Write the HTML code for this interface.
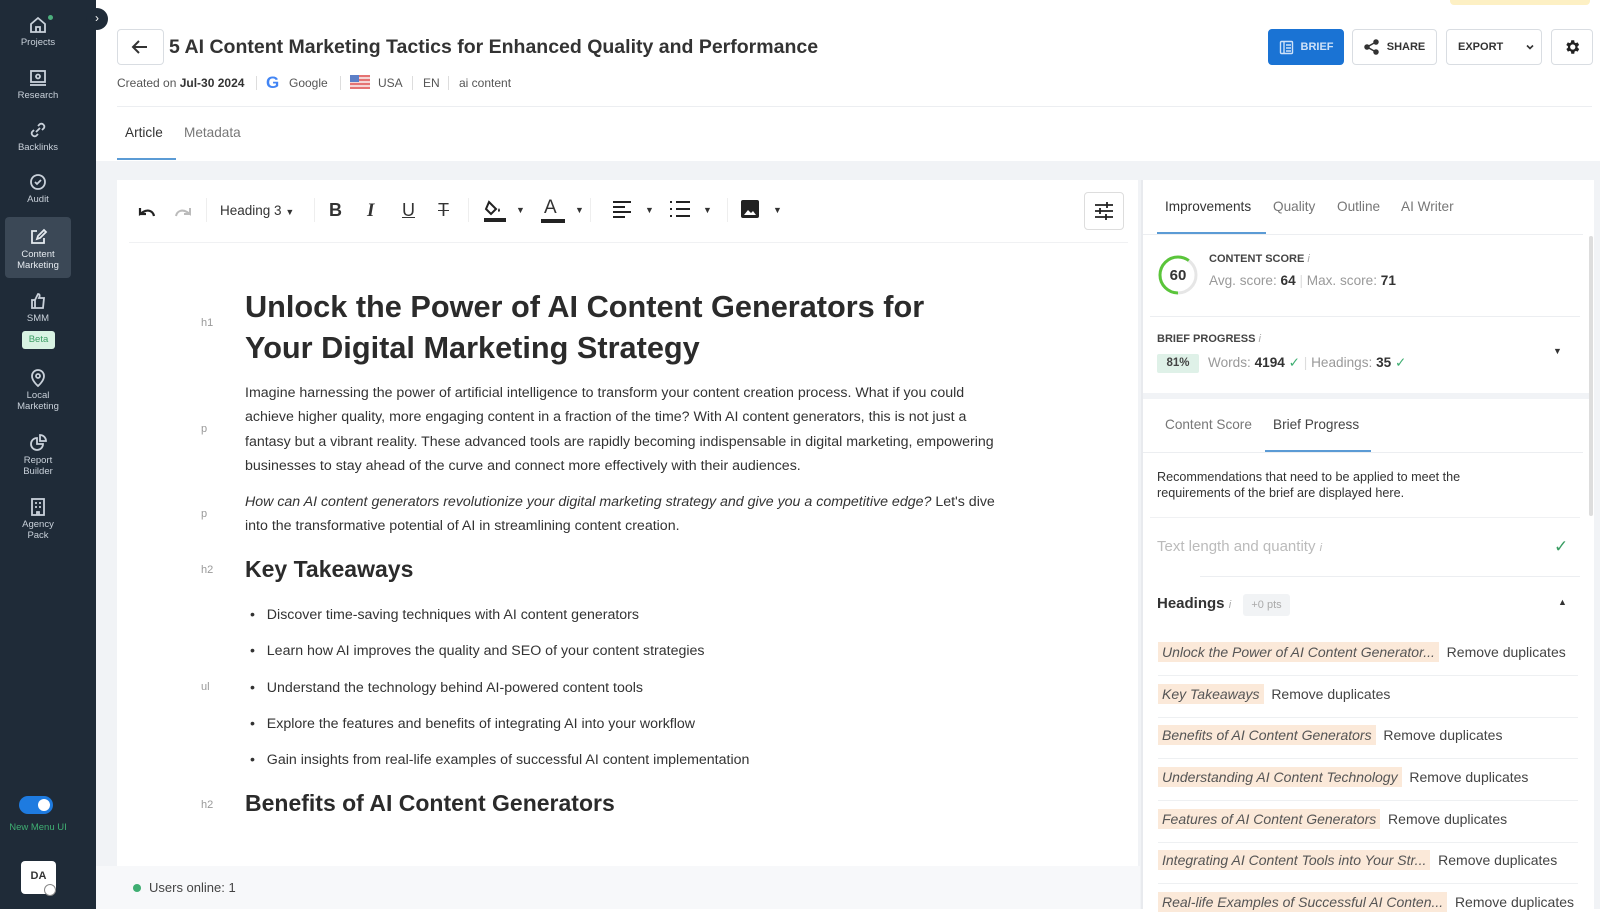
<!DOCTYPE html>
<html><head><meta charset="utf-8"><style>
*{box-sizing:border-box;margin:0;padding:0}
body{width:1600px;height:909px;overflow:hidden;background:#fff;font-family:"Liberation Sans",sans-serif;color:#333;position:relative}
.a{position:absolute;white-space:nowrap}
.sb{position:absolute;left:0;top:0;width:96px;height:909px;background:#1f2b38}
.ni{position:absolute;left:0;width:76px;text-align:center;color:#c9d1da;font-size:9.5px;line-height:11px}
.ni svg{display:block;margin:0 auto 2px}
.btn{position:absolute;top:29px;height:36px;border:1px solid #d9dde2;border-radius:4px;background:#fff;font-size:11px;font-weight:bold;color:#333;display:flex;align-items:center;justify-content:center;gap:7px}
.tb{position:absolute;top:200px;color:#333;font-size:17px}
.lbl{position:absolute;left:201px;color:#999;font-size:11px}
.p{position:absolute;left:245px;font-size:14.2px;color:#333;white-space:nowrap;line-height:24.4px}
.hl{background:#fbe9d9;color:#555;font-style:italic;padding:2px 4px}
.row{position:absolute;left:1158px;font-size:14px;color:#444;white-space:nowrap}
.sep{position:absolute;left:1158px;width:420px;height:1px;background:#eef0f2}
</style></head><body>
<div class="sb">
 <div class="ni" style="top:15px;left:0;width:76px"><svg width="20" height="20" viewBox="0 0 20 20" fill="none" stroke="#c9d1da" stroke-width="1.8"><path d="M3 9l7-6 7 6v8H3z"/><path d="M8 17v-5h4v5"/></svg>Projects</div>
 <div style="position:absolute;left:48px;top:15px;width:5px;height:5px;border-radius:50%;background:#4caf7d"></div>
 <div class="ni" style="top:68px"><svg width="20" height="20" viewBox="0 0 20 20" fill="none" stroke="#c9d1da" stroke-width="1.8"><rect x="3" y="3" width="14" height="11"/><path d="M2 17h16"/><circle cx="10" cy="8.5" r="2"/></svg>Research</div>
 <div class="ni" style="top:120px"><svg width="20" height="20" viewBox="0 0 20 20" fill="none" stroke="#c9d1da" stroke-width="1.8"><path d="M8 12l4-4M6 10l-2 2a3 3 0 004 4l2-2M14 10l2-2a3 3 0 00-4-4l-2 2"/></svg>Backlinks</div>
 <div class="ni" style="top:172px"><svg width="20" height="20" viewBox="0 0 20 20" fill="none" stroke="#c9d1da" stroke-width="1.8"><circle cx="10" cy="10" r="7"/><path d="M7 10l2 2 4-4"/></svg>Audit</div>
 <div style="position:absolute;left:5px;top:217px;width:66px;height:61px;background:#3b4856;border-radius:4px"></div>
 <div class="ni" style="top:227px;color:#e6ebf0"><svg width="20" height="20" viewBox="0 0 20 20" fill="none" stroke="#e6ebf0" stroke-width="1.8"><path d="M16 11v5H4V4h5"/><path d="M9 12l1-3 6-6 2 2-6 6z"/></svg>Content<br>Marketing</div>
 <div class="ni" style="top:291px"><svg width="20" height="20" viewBox="0 0 20 20" fill="none" stroke="#c9d1da" stroke-width="1.8"><path d="M4 9h3v8H4zM7 9l3-6c2 0 2 2 1 4h5l-1 10H7"/></svg>SMM</div>
 <div style="position:absolute;left:22px;top:331px;width:33px;height:18px;background:#d8f3e3;border-radius:3px;color:#3a9d63;font-size:9.5px;text-align:center;line-height:18px">Beta</div>
 <div class="ni" style="top:368px"><svg width="20" height="20" viewBox="0 0 20 20" fill="none" stroke="#c9d1da" stroke-width="1.8"><path d="M10 18s6-5 6-10a6 6 0 00-12 0c0 5 6 10 6 10z"/><circle cx="10" cy="8" r="2"/></svg>Local<br>Marketing</div>
 <div class="ni" style="top:433px"><svg width="20" height="20" viewBox="0 0 20 20" fill="none" stroke="#c9d1da" stroke-width="1.8"><path d="M9 5a6 6 0 106 6H9z"/><path d="M12 2v6h6a6 6 0 00-6-6z"/></svg>Report<br>Builder</div>
 <div class="ni" style="top:497px"><svg width="20" height="20" viewBox="0 0 20 20" fill="none" stroke="#c9d1da" stroke-width="1.8"><rect x="4" y="2" width="12" height="16"/><path d="M7 6h2M11 6h2M7 10h2M11 10h2M9 18v-3h2v3"/></svg>Agency<br>Pack</div>
 <div style="position:absolute;left:19px;top:796px;width:34px;height:18px;border-radius:9px;background:#1e7be0"></div>
 <div style="position:absolute;left:38px;top:799px;width:12px;height:12px;border-radius:50%;background:#fff"></div>
 <div class="a" style="left:0;width:76px;text-align:center;top:822px;font-size:9.5px;color:#3fae72">New Menu UI</div>
 <div style="position:absolute;left:21px;top:861px;width:35px;height:33px;border-radius:4px;background:#fff;color:#333;font-size:11px;font-weight:bold;text-align:center;line-height:30px">DA</div>
 <div style="position:absolute;left:44px;top:884px;width:12px;height:12px;border-radius:50%;background:#fff;border:1.5px solid #888"></div>
</div>
<div style="position:absolute;left:86px;top:8px;width:22px;height:22px;border-radius:50%;background:#1f2b38;color:#fff;font-size:12px;text-align:center;line-height:21px">›</div>
<div style="position:absolute;left:1450px;top:0;width:140px;height:5px;background:#fdf0c4;border-radius:0 0 4px 4px"></div>

<div style="position:absolute;left:117px;top:29px;width:47px;height:36px;border:1px solid #d9dde2;border-radius:4px"></div>
<svg class="a" style="left:130px;top:37px" width="20" height="20" viewBox="0 0 20 20" fill="none" stroke="#333" stroke-width="2"><path d="M17 10H4M9 4l-6 6 6 6"/></svg>
<div class="a" style="left:169px;top:36px;font-size:19.5px;font-weight:bold;color:#333">5 AI Content Marketing Tactics for Enhanced Quality and Performance</div>
<div class="a" style="left:117px;top:76px;font-size:12px;color:#555">Created on <b style="color:#333">Jul-30 2024</b></div>
<div style="position:absolute;left:256px;top:76px;width:1px;height:14px;background:#ddd"></div>
<div class="a" style="left:266px;top:73px;font-size:17px;font-weight:bold;color:#4285f4">G</div>
<div class="a" style="left:289px;top:76px;font-size:12px;color:#555">Google</div>
<div style="position:absolute;left:340px;top:76px;width:1px;height:14px;background:#ddd"></div>
<div style="position:absolute;left:350px;top:75px;width:20px;height:14px;background:repeating-linear-gradient(#e57373 0 2px,#f5d5d5 2px 4px)"><div style="width:9px;height:7px;background:#5c7fc7"></div></div>
<div class="a" style="left:378px;top:76px;font-size:12px;color:#555">USA</div>
<div style="position:absolute;left:412px;top:76px;width:1px;height:14px;background:#ddd"></div>
<div class="a" style="left:423px;top:76px;font-size:12px;color:#555">EN</div>
<div style="position:absolute;left:448px;top:76px;width:1px;height:14px;background:#ddd"></div>
<div class="a" style="left:459px;top:76px;font-size:12px;color:#555">ai content</div>

<div class="btn" style="left:1268px;width:76px;background:#1a73d4;border-color:#1a73d4;color:#cfe2f8"><svg width="15" height="15" viewBox="0 0 15 15" fill="none" stroke="#cfe2f8" stroke-width="1.4"><rect x="1.5" y="1.5" width="12" height="12" rx="1"/><path d="M5 1.5v12M7 5h5M7 8h5M7 11h5"/></svg>BRIEF</div>
<div class="btn" style="left:1352px;width:85px"><svg width="16" height="16" viewBox="0 0 16 16" fill="#333" stroke="#333" stroke-width="1.5"><circle cx="12" cy="3" r="2"/><circle cx="3" cy="8" r="2"/><circle cx="12" cy="13" r="2"/><path d="M12 3L3 8l9 5" fill="none"/></svg>SHARE</div>
<div class="btn" style="left:1446px;width:96px;justify-content:flex-start;padding-left:11px;gap:22px">EXPORT <svg width="10" height="10" viewBox="0 0 10 10" fill="none" stroke="#333" stroke-width="1.6"><path d="M2 3.5l3 3 3-3"/></svg></div>
<div class="btn" style="left:1551px;width:42px"><svg width="18" height="18" viewBox="0 0 24 24" fill="#222"><path d="M19.4 13a7.5 7.5 0 000-2l2.1-1.6-2-3.5-2.5 1a7 7 0 00-1.7-1L15 3h-4l-.4 2.8a7 7 0 00-1.7 1l-2.5-1-2 3.5L6.6 11a7.5 7.5 0 000 2l-2.1 1.6 2 3.5 2.5-1a7 7 0 001.7 1L11 21h4l.4-2.8a7 7 0 001.7-1l2.5 1 2-3.5zM13 15.5a3.5 3.5 0 110-7 3.5 3.5 0 010 7z"/></svg></div>

<div style="position:absolute;left:117px;top:106px;width:1475px;height:1px;background:#eceef1"></div>
<div class="a" style="left:125px;top:125px;font-size:13.6px;color:#333">Article</div>
<div class="a" style="left:184px;top:125px;font-size:13.6px;color:#777">Metadata</div>
<div style="position:absolute;left:117px;top:158px;width:59px;height:2px;background:#5b9bd5"></div>

<div style="position:absolute;left:96px;top:161px;width:1504px;height:748px;background:#f1f3f6"></div>
<div style="position:absolute;left:117px;top:180px;width:1021px;height:686px;background:#fff"></div>
<div style="position:absolute;left:96px;top:866px;width:1044px;height:43px;background:#f7f8fa"></div>
<div style="position:absolute;left:133px;top:884px;width:8px;height:8px;border-radius:50%;background:#3fae72"></div>
<div class="a" style="left:149px;top:880px;font-size:13px;color:#444">Users online: 1</div>

<!-- toolbar -->
<div style="position:absolute;left:129px;top:242px;width:999px;height:1px;background:#f0f1f3"></div>
<svg class="a" style="left:137px;top:203px" width="20" height="16" viewBox="0 0 20 16" fill="none" stroke="#222" stroke-width="2.2"><path d="M17 13c-1-5-6-7-11-4L3 11V5"/><path d="M3 11h6"/></svg>
<svg class="a" style="left:173px;top:203px" width="20" height="16" viewBox="0 0 20 16" fill="none" stroke="#bbb" stroke-width="2"><path d="M3 13c1-5 6-7 11-4l3 2V5M17 11h-6"/></svg>
<div style="position:absolute;left:206px;top:198px;width:1px;height:24px;background:#eee"></div>
<div class="tb" style="left:220px;top:203px;font-size:13.5px">Heading 3 <span style="font-size:9px">▼</span></div>
<div style="position:absolute;left:314px;top:198px;width:1px;height:24px;background:#eee"></div>
<div class="tb" style="left:329px;font-weight:bold;font-size:18px">B</div>
<div class="tb" style="left:367px;font-style:italic;font-family:'Liberation Serif';font-weight:bold;font-size:19px">I</div>
<div class="tb" style="left:402px;text-decoration:underline;font-size:18px">U</div>
<div class="tb" style="left:438px;text-decoration:line-through;font-size:18px">T</div>
<div style="position:absolute;left:468px;top:198px;width:1px;height:24px;background:#eee"></div>
<svg class="a" style="left:483px;top:197px" width="24" height="26" viewBox="0 0 24 26"><path d="M6 5l7 7-5 5-5-5z" fill="none" stroke="#222" stroke-width="2"/><path d="M17 13c0 2-2 3-2 0l1-2z" fill="#222"/><rect x="1" y="21" width="22" height="4" fill="#222"/></svg>
<div class="tb" style="left:516px;top:205px;font-size:9px">▼</div>
<div class="tb" style="left:544px;top:197px;font-size:19px">A</div>
<div style="position:absolute;left:541px;top:219px;width:24px;height:4px;background:#222"></div>
<div class="tb" style="left:575px;top:205px;font-size:9px">▼</div>
<div style="position:absolute;left:590px;top:198px;width:1px;height:24px;background:#eee"></div>
<svg class="a" style="left:612px;top:200px" width="20" height="18" viewBox="0 0 20 18" stroke="#222" stroke-width="2"><path d="M1 2h18M1 7h12M1 12h18M1 17h12"/></svg>
<div class="tb" style="left:645px;top:205px;font-size:9px">▼</div>
<svg class="a" style="left:669px;top:200px" width="22" height="18" viewBox="0 0 22 18" stroke="#222" stroke-width="2"><path d="M1 2h2M1 9h2M1 16h2M7 2h14M7 9h14M7 16h14"/></svg>
<div class="tb" style="left:703px;top:205px;font-size:9px">▼</div>
<div style="position:absolute;left:727px;top:198px;width:1px;height:24px;background:#eee"></div>
<svg class="a" style="left:740px;top:199px" width="20" height="20" viewBox="0 0 20 20"><rect x="1" y="1" width="18" height="18" rx="2" fill="#222"/><path d="M4 16l4-5 3 3 2-2 3 4z" fill="#fff"/></svg>
<div class="tb" style="left:773px;top:205px;font-size:9px">▼</div>
<div style="position:absolute;left:1084px;top:192px;width:40px;height:38px;border:1px solid #ddd;border-radius:4px"></div>
<svg class="a" style="left:1094px;top:201px" width="20" height="20" viewBox="0 0 20 20" stroke="#222" stroke-width="1.8"><path d="M1 4h18M1 10h18M1 16h18M13 1v6M6 7v6M12 13v6"/></svg>

<!-- content -->
<div class="lbl" style="top:317px">h1</div>
<div class="a" style="left:245px;top:286px;font-size:30.7px;font-weight:bold;color:#2b2b2b;line-height:41px">Unlock the Power of AI Content Generators for<br>Your Digital Marketing Strategy</div>
<div class="lbl" style="top:423px">p</div>
<div class="p" style="top:381px">Imagine harnessing the power of artificial intelligence to transform your content creation process. What if you could<br>achieve higher quality, more engaging content in a fraction of the time? With AI content generators, this is not just a<br>fantasy but a vibrant reality. These advanced tools are rapidly becoming indispensable in digital marketing, empowering<br>businesses to stay ahead of the curve and connect more effectively with their audiences.</div>
<div class="lbl" style="top:508px">p</div>
<div class="p" style="top:490px"><i>How can AI content generators revolutionize your digital marketing strategy and give you a competitive edge?</i> Let's dive<br>into the transformative potential of AI in streamlining content creation.</div>
<div class="lbl" style="top:564px">h2</div>
<div class="a" style="left:245px;top:556px;font-size:23px;font-weight:bold;color:#2b2b2b">Key Takeaways</div>
<div class="lbl" style="top:681px">ul</div>
<div class="p" style="left:250px;top:603px">•&nbsp;&nbsp; Discover time-saving techniques with AI content generators</div>
<div class="p" style="left:250px;top:639px">•&nbsp;&nbsp; Learn how AI improves the quality and SEO of your content strategies</div>
<div class="p" style="left:250px;top:676px">•&nbsp;&nbsp; Understand the technology behind AI-powered content tools</div>
<div class="p" style="left:250px;top:712px">•&nbsp;&nbsp; Explore the features and benefits of integrating AI into your workflow</div>
<div class="p" style="left:250px;top:748px">•&nbsp;&nbsp; Gain insights from real-life examples of successful AI content implementation</div>
<div class="lbl" style="top:799px">h2</div>
<div class="a" style="left:245px;top:790px;font-size:23px;font-weight:bold;color:#2b2b2b">Benefits of AI Content Generators</div>

<!-- right panel -->
<div style="position:absolute;left:1141px;top:180px;width:453px;height:729px;background:#fff;border-left:2px solid #e8eaee"></div>
<div style="position:absolute;left:1589px;top:236px;width:4px;height:280px;background:#ddd;border-radius:2px"></div>
<div class="a" style="left:1165px;top:199px;font-size:13.6px;color:#333">Improvements</div>
<div class="a" style="left:1273px;top:199px;font-size:13.6px;color:#777">Quality</div>
<div class="a" style="left:1337px;top:199px;font-size:13.6px;color:#777">Outline</div>
<div class="a" style="left:1401px;top:199px;font-size:13.6px;color:#777">AI Writer</div>
<div style="position:absolute;left:1157px;top:232px;width:109px;height:2px;background:#5b9bd5"></div>
<div style="position:absolute;left:1143px;top:234px;width:440px;height:1px;background:#eceef1"></div>
<svg class="a" style="left:1157px;top:254px" width="42" height="42" viewBox="0 0 42 42"><circle cx="21" cy="21" r="18" fill="none" stroke="#e6e6e6" stroke-width="3"/><circle cx="21" cy="21" r="18" fill="none" stroke="#5ac53a" stroke-width="3" stroke-dasharray="68 113" transform="rotate(90 21 21)"/><text x="21" y="26" text-anchor="middle" font-size="15" font-weight="bold" font-family="Liberation Sans" fill="#333">60</text></svg>
<div class="a" style="left:1209px;top:253px;font-size:11px;font-weight:bold;color:#444">CONTENT SCORE <i style="color:#aaa;font-weight:normal">i</i></div>
<div class="a" style="left:1209px;top:273px;font-size:13.6px;color:#999">Avg. score: <b style="color:#333">64</b> <span style="color:#ddd">|</span> Max. score: <b style="color:#333">71</b></div>
<div style="position:absolute;left:1150px;top:316px;width:430px;height:1px;background:#eceef1"></div>
<div class="a" style="left:1157px;top:333px;font-size:11px;font-weight:bold;color:#444">BRIEF PROGRESS <i style="color:#aaa;font-weight:normal">i</i></div>
<div style="position:absolute;left:1157px;top:354px;width:42px;height:19px;background:#dff1e8;border-radius:2px;font-size:11.5px;font-weight:bold;color:#444;text-align:center;line-height:19px">81%</div>
<div class="a" style="left:1208px;top:355px;font-size:13.6px;color:#999">Words: <b style="color:#333">4194</b> <span style="color:#3fae72">✓</span> <span style="color:#ddd">|</span> Headings: <b style="color:#333">35</b> <span style="color:#3fae72">✓</span></div>
<div class="a" style="left:1553px;top:346px;font-size:9px;color:#333">▼</div>
<div style="position:absolute;left:1143px;top:393px;width:446px;height:6px;background:#f1f3f6"></div>
<div class="a" style="left:1165px;top:417px;font-size:13.6px;color:#777">Content Score</div>
<div class="a" style="left:1273px;top:417px;font-size:13.6px;color:#444">Brief Progress</div>
<div style="position:absolute;left:1265px;top:450px;width:106px;height:2px;background:#5b9bd5"></div>
<div style="position:absolute;left:1143px;top:452px;width:440px;height:1px;background:#eceef1"></div>
<div class="a" style="left:1157px;top:469px;font-size:12.6px;color:#333;line-height:16px">Recommendations that need to be applied to meet the<br>requirements of the brief are displayed here.</div>
<div style="position:absolute;left:1150px;top:517px;width:430px;height:1px;background:#f0f1f3"></div>
<div class="a" style="left:1157px;top:538px;font-size:15px;color:#bbb">Text length and quantity <i style="font-size:11px">i</i></div>
<div class="a" style="left:1554px;top:537px;font-size:17px;color:#3a9d63">✓</div>
<div style="position:absolute;left:1200px;top:576px;width:380px;height:1px;background:#eceef1"></div>
<div class="a" style="left:1157px;top:595px;font-size:15px;font-weight:bold;color:#333">Headings <i style="font-size:11px;color:#aaa;font-weight:normal">i</i></div>
<div style="position:absolute;left:1243px;top:594px;width:47px;height:22px;background:#f1f3f5;border-radius:3px;font-size:11px;color:#aaa;text-align:center;line-height:22px">+0 pts</div>
<div class="a" style="left:1558px;top:597px;font-size:9px;color:#333">▲</div>
<div class="row" style="top:644px"><span class="hl">Unlock the Power of AI Content Generator...</span>&nbsp; Remove duplicates</div>
<div class="sep" style="top:675px"></div>
<div class="row" style="top:686px"><span class="hl">Key Takeaways</span>&nbsp; Remove duplicates</div>
<div class="sep" style="top:717px"></div>
<div class="row" style="top:727px"><span class="hl">Benefits of AI Content Generators</span>&nbsp; Remove duplicates</div>
<div class="sep" style="top:758px"></div>
<div class="row" style="top:769px"><span class="hl">Understanding AI Content Technology</span>&nbsp; Remove duplicates</div>
<div class="sep" style="top:800px"></div>
<div class="row" style="top:811px"><span class="hl">Features of AI Content Generators</span>&nbsp; Remove duplicates</div>
<div class="sep" style="top:842px"></div>
<div class="row" style="top:852px"><span class="hl">Integrating AI Content Tools into Your Str...</span>&nbsp; Remove duplicates</div>
<div class="sep" style="top:883px"></div>
<div class="row" style="top:894px"><span class="hl">Real-life Examples of Successful AI Conten...</span>&nbsp; Remove duplicates</div>
</body></html>
